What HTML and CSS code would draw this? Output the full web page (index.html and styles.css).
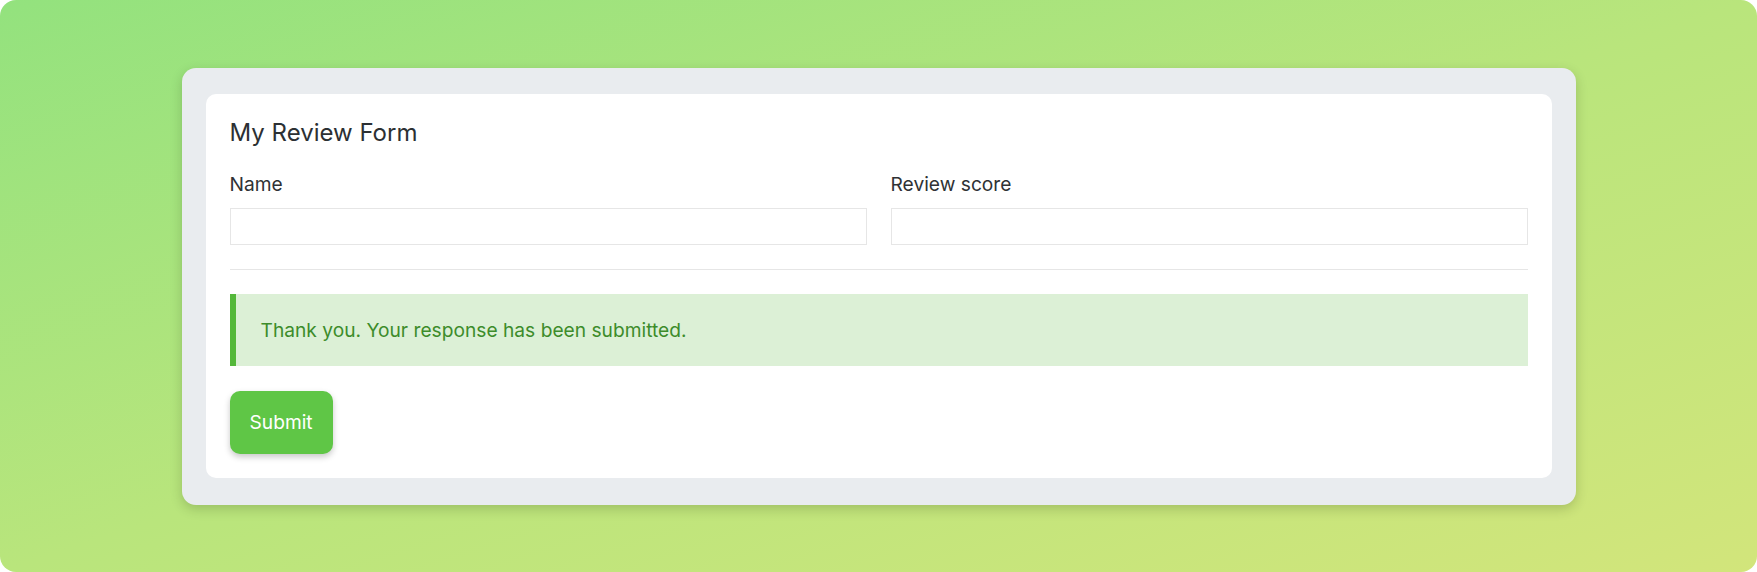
FILE: index.html
```html
<!DOCTYPE html>
<html lang="en">
<head>
<meta charset="utf-8">
<title>My Review Form</title>
<link rel="stylesheet" href="styles.css">
</head>
<body>
<div class="stage">
  <div class="card">
    <form class="form">
      <h1 class="title">My Review Form</h1>
      <div class="fields">
        <div class="field">
          <label class="label" for="name">Name</label>
          <input class="input" id="name" type="text">
        </div>
        <div class="field">
          <label class="label" for="score">Review score</label>
          <input class="input" id="score" type="text">
        </div>
      </div>
      <hr class="divider">
      <div class="alert">Thank you. Your response has been submitted.</div>
      <div class="actions">
        <button class="btn" type="button">Submit</button>
      </div>
    </form>
  </div>
</div>
</body>
</html>
```

FILE: styles.css
```css
* { box-sizing: border-box; }
html, body { margin: 0; padding: 0; background: #ffffff; }
body { font-family: Inter, "Noto Sans", sans-serif; }

.stage {
  width: 1757px;
  height: 572px;
  border-radius: 16px;
  background: linear-gradient(to bottom right, #93e27e 0%, #b9e57c 50%, #d2e57b 100%);
  display: flex;
  align-items: center;
  justify-content: center;
}

.card {
  width: 1394px;
  background: #e9ecef;
  border-radius: 14px;
  padding: 26px 24px 27px;
  box-shadow: 0 4px 12px rgba(40, 60, 20, 0.22);
}

.form {
  background: #ffffff;
  border-radius: 10px;
  padding: 24px;
  display: flex;
  flex-direction: column;
}

.title {
  margin: 0 0 24px;
  font-size: 24px;
  line-height: 29px;
  font-weight: 400;
  color: #2c3033;
}

.fields {
  display: grid;
  grid-template-columns: 1fr 1fr;
  gap: 24px;
}

.field { display: flex; flex-direction: column; }

.label {
  font-size: 19.2px;
  line-height: 27px;
  color: #2f3235;
  margin-bottom: 10px;
}

.input {
  height: 37px;
  border: 1px solid #e6e6e6;
  background: #ffffff;
  font: inherit;
  padding: 0 10px;
  outline: none;
}

.divider {
  margin: 24px 0;
  border: 0;
  border-top: 1px solid #e6e6e6;
  height: 0;
}

.alert {
  background: #dcf0d6;
  border-left: 6px solid #54b83a;
  padding: 22px 25px;
  font-size: 19.2px;
  line-height: 28px;
  color: #3d8c2b;
}

.actions { margin-top: 25px; display: flex; }

.btn {
  height: 63px;
  padding: 0 20px;
  border: 0;
  border-radius: 10px;
  background: #5fc646;
  color: #ffffff;
  font-family: inherit;
  font-size: 19.2px;
  box-shadow: 0 3px 6px rgba(0, 0, 0, 0.22);
}
```
